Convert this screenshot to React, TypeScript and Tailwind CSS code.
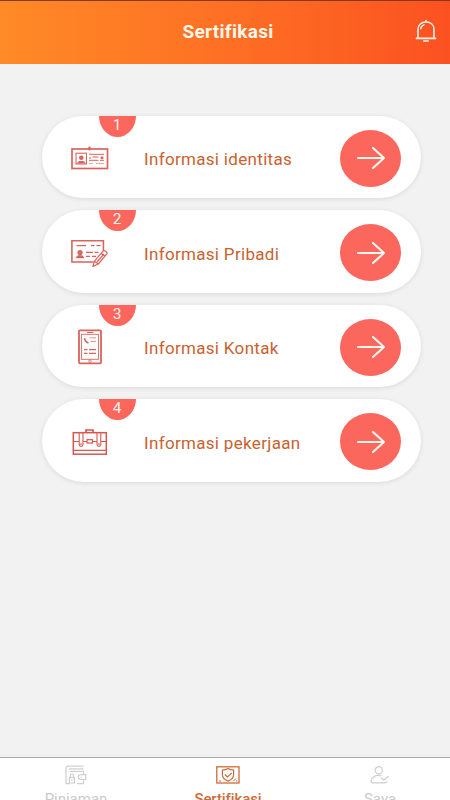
import React from "react";

type IconProps = { className?: string };

const IdentityIcon = ({ className }: IconProps) => (
  <svg viewBox="0 0 38 24" className={className} fill="none" stroke="#d9655c">
    <rect x="1" y="3" width="35.5" height="19.5" strokeWidth="1.7" />
    <path d="M18.5 0.5v4M17 2.2h3" strokeWidth="1.4" />
    <rect x="5" y="7.2" width="10.5" height="10.8" strokeWidth="1.1" />
    <circle cx="10.3" cy="11.7" r="2.3" fill="#d9655c" stroke="none" />
    <path d="M6 17.5c.4-2 1.800-2.500 4.300-2.500s3.900.5 4.300 2.500z" fill="#d9655c" stroke="none" />
    <path d="M18 8.300h15" strokeWidth="1" />
    <path d="M18 12h2M21.500 11h6M18 14.300h9.500" strokeWidth="1" />
    <path d="M18 17.600h4M25 17.600h8" strokeWidth=".9" opacity=".65" />
    <circle cx="31" cy="11.800" r="1.500" fill="#d9655c" stroke="none" />
    <path d="M29 14.300h4" strokeWidth="1" />
  </svg>
);

const PersonalIcon = ({ className }: IconProps) => (
  <svg viewBox="0 0 38 28" className={className} fill="none" stroke="#d9655c">
    <path d="M22.500 23H.9V1.800h31.500v10" strokeWidth="1.600" />
    <path d="M5.500 6.600h9.500M20 6.600h3.500M25.500 6.600h4" strokeWidth="1.200" />
    <circle cx="9" cy="13.500" r="2.600" fill="#d9655c" stroke="none" />
    <path d="M5 19.300c.3-2.500 1.700-3.300 4-3.300s3.800.8 4.100 3.300z" fill="#d9655c" stroke="none" />
    <path d="M15 13.300h7M23.500 13.300h4M15 17.300h4M21 17.300h4" strokeWidth="1.200" />
    <path d="m23.300 22.300 9-10.500c1-.7 3.700 1.200 3.900 2.700l-8.900 10.500-5.400 2.400zM23.300 22.300l4 2.700M30 14.200l3.900 2.900M26 23l7-8" strokeWidth="1.200" strokeLinejoin="round" />
  </svg>
);

const ContactIcon = ({ className }: IconProps) => (
  <svg viewBox="0 0 24 36" className={className} fill="none" stroke="#d9655c">
    <rect x="1" y="1.400" width="22" height="33" rx=".8" strokeWidth="1.800" />
    <rect x="3.600" y="5.300" width="16.800" height="25" strokeWidth=".9" />
    <path d="M9 3.500h6.500" strokeWidth="1.100" />
    <circle cx="12" cy="32.200" r="1.300" strokeWidth=".8" />
    <path d="M6.500 9.200c.3 2.300 1.700 4.100 4 4.700" strokeWidth="1.600" />
    <path d="M11.500 8.800h6.500M12.700 12.500h5.300" strokeWidth=".9" opacity=".75" />
    <path d="M6 20.700h3.500M11 20.700h7M6 24.300h3.500M11 24.300h7" strokeWidth="1.200" />
  </svg>
);

const WorkIcon = ({ className }: IconProps) => (
  <svg viewBox="0 0 36 28" className={className} fill="none" stroke="#d9564e">
    <rect x="1.300" y="4.700" width="33" height="21.500" strokeWidth="1.500" />
    <path d="M14 4.500V2h7v2.500" strokeWidth="1.700" />
    <path d="M2 13.500h5M11 13.500h4M20.500 13.500h4.500M29 13.500h5M2 22.300h32" strokeWidth="1.200" />
    <rect x="15" y="11.700" width="5.500" height="3.300" strokeWidth="1.200" />
    <path d="M7.200 4.700v11.800a1.900 1.900 0 0 0 3.800 0V4.700M25 4.700v11.800a1.900 1.900 0 0 0 3.800 0V4.700" strokeWidth="1.100" />
    <path d="M8 16h2.200M25.800 16H28" strokeWidth="1" />
  </svg>
);

const BellIcon = ({ className }: IconProps) => (
  <svg viewBox="0 0 22 24" className={className} fill="none" stroke="#fff3e8" strokeLinecap="round">
    <path d="M3 19V10.500C3 5.800 6.400 3 11 3s8 2.800 8 7.500V19" strokeWidth="1.600" />
    <path d="M1.500 19.300h19" strokeWidth="1.700" />
    <path d="M11 1.500v1" strokeWidth="1.700" />
    <path d="M5.800 9.800c.1-2 1.400-3.500 3.200-4" strokeWidth="1.400" />
    <path d="M8.700 22h4.600" strokeWidth="1.600" />
  </svg>
);

const WalletIcon = ({ className }: IconProps) => (
  <svg viewBox="0 0 22 20" className={className} fill="none" stroke="#cfcfcf" strokeWidth="1.200">
    <path d="M18.500 1.200H3.200A2.100 2.100 0 0 0 1 3.300V18.700h4M12 18.700h6.500v-3.500M18.500 9.200V6.400H5.200M4 3.900h14.500" />
    <path d="M20.700 9.700h-5a2.400 2.400 0 0 0 0 4.800h5zM15.800 12.100h1" />
    <path d="M4.400 12.700h5v5.300h-5zM5.300 12.500V10.600a1.600 1.600 0 0 1 3.200 0v1.900M6.900 14.500v1.500" />
  </svg>
);

const CertificateIcon = ({ className }: IconProps) => (
  <svg viewBox="0 0 24 18" className={className} fill="none" stroke="#cf6b39">
    <rect x=".8" y=".8" width="22.200" height="16.200" strokeWidth="1.300" />
    <path d="M12 2.500c1.700 1.200 3.500 1.600 5.600 1.600v4.700c0 3.100-2.500 5.100-5.600 6.300-3.100-1.200-5.600-3.200-5.600-6.300V4.100c2.100 0 3.900-.4 5.600-1.600z" strokeWidth="1.200" />
    <path d="m8.800 8.500 2.600 2.400 4.400-4" strokeWidth="1.200" />
    <path d="M3 15h2M17.500 15l2.500-2.500M20 15h1.500" strokeWidth="1" />
  </svg>
);

const UserIcon = ({ className }: IconProps) => (
  <svg viewBox="0 0 20 18" className={className} fill="none" stroke="#cfcfcf" strokeWidth="1.200" strokeLinecap="round">
    <circle cx="8.800" cy="4.300" r="3.600" />
    <path d="M11 9.800c-5.300-1.300-9.600 1.300-9.900 5-.1 1.400.5 2 1.700 2h12.400c1 0 1.600-.5 1.700-1.500M11.500 12l2.500 2.300 4.300-4" />
  </svg>
);

const steps = [
  { label: "Informasi identitas", Icon: IdentityIcon, size: "h-6 w-[38px]" },
  { label: "Informasi Pribadi", Icon: PersonalIcon, size: "h-7 w-[38px]" },
  { label: "Informasi Kontak", Icon: ContactIcon, size: "h-9 w-6" },
  { label: "Informasi pekerjaan", Icon: WorkIcon, size: "h-7 w-9" },
];

const tabs = [
  { label: "Pinjaman", Icon: WalletIcon, color: "text-[#cbcbcb]", size: "h-5 w-[22px]" },
  { label: "Sertifikasi", Icon: CertificateIcon, color: "font-medium tracking-[-0.100px] text-[#cf6b39]", size: "h-[18px] w-6" },
  { label: "Saya", Icon: UserIcon, color: "text-[#cbcbcb]", size: "h-[18px] w-5" },
];

export default function App() {
  return (
    <div className="flex h-[800px] w-[450px] flex-col overflow-hidden bg-[#f2f2f2] font-['Roboto',sans-serif]">
      <header className="grid h-16 shrink-0 grid-cols-[1fr_auto_1fr] items-center border-t border-[#88381d] bg-linear-to-r from-[#ff8a26] to-[#fb5121] pr-[13px] pb-[3px] pl-[19px]">
        <span />
        <h1 className="pt-[2px] text-[19px] leading-6 font-bold tracking-[0.300px] text-[#fff7ea] [font-variant-ligatures:normal]">Sertifikasi</h1>
        <BellIcon className="h-6 w-[22px] justify-self-end" />
      </header>

      <main className="flex flex-1 flex-col gap-3 pt-[51.500px] pr-[29.500px] pl-[42px]">
        {steps.map(({ label, Icon, size }, i) => (
          <button
            key={label}
            className="relative flex h-[82.500px] shrink-0 items-center rounded-full bg-white pt-[3px] pr-[19.500px] pl-[26px] text-left shadow-[0_1px_5px_rgba(0,0,0,0.10)]"
          >
            <span className="absolute top-0 left-[56.500px] flex h-[21px] w-[37px] justify-center rounded-b-[50%_100%] bg-[#fb665d] text-[15.500px] leading-[19px] text-[#fff0ea]">
              {i + 1}
            </span>
            <span className="flex w-[43px] justify-center">
              <Icon className={size} />
            </span>
            <span className="ml-[33px] flex-1 pt-[2px] text-[17px] leading-6 tracking-[0.320px] whitespace-nowrap text-[#c9622f]">
              {label}
            </span>
            <span className="flex h-[57px] w-[61px] items-center justify-center rounded-[50%] bg-[#fb665d]">
              <svg viewBox="0 0 30 24" className="h-6 w-[30px]" fill="none" stroke="#fff5ef" strokeWidth="2.200" strokeLinecap="round" strokeLinejoin="round">
                <path d="M2 12h26M17 2l11 10-11 10" />
              </svg>
            </span>
          </button>
        ))}
      </main>

      <nav className="grid h-[43px] shrink-0 grid-cols-[152px_152px_152px] border-t border-[#aaaaaa] bg-white">
        {tabs.map(({ label, Icon, color, size }) => (
          <a key={label} className={`flex flex-col items-center pt-[7px] ${color}`}>
            <span className="flex h-5 items-center">
              <Icon className={size} />
            </span>
            <span className="mt-1 text-[15px] leading-5">{label}</span>
          </a>
        ))}
      </nav>
    </div>
  );
}
